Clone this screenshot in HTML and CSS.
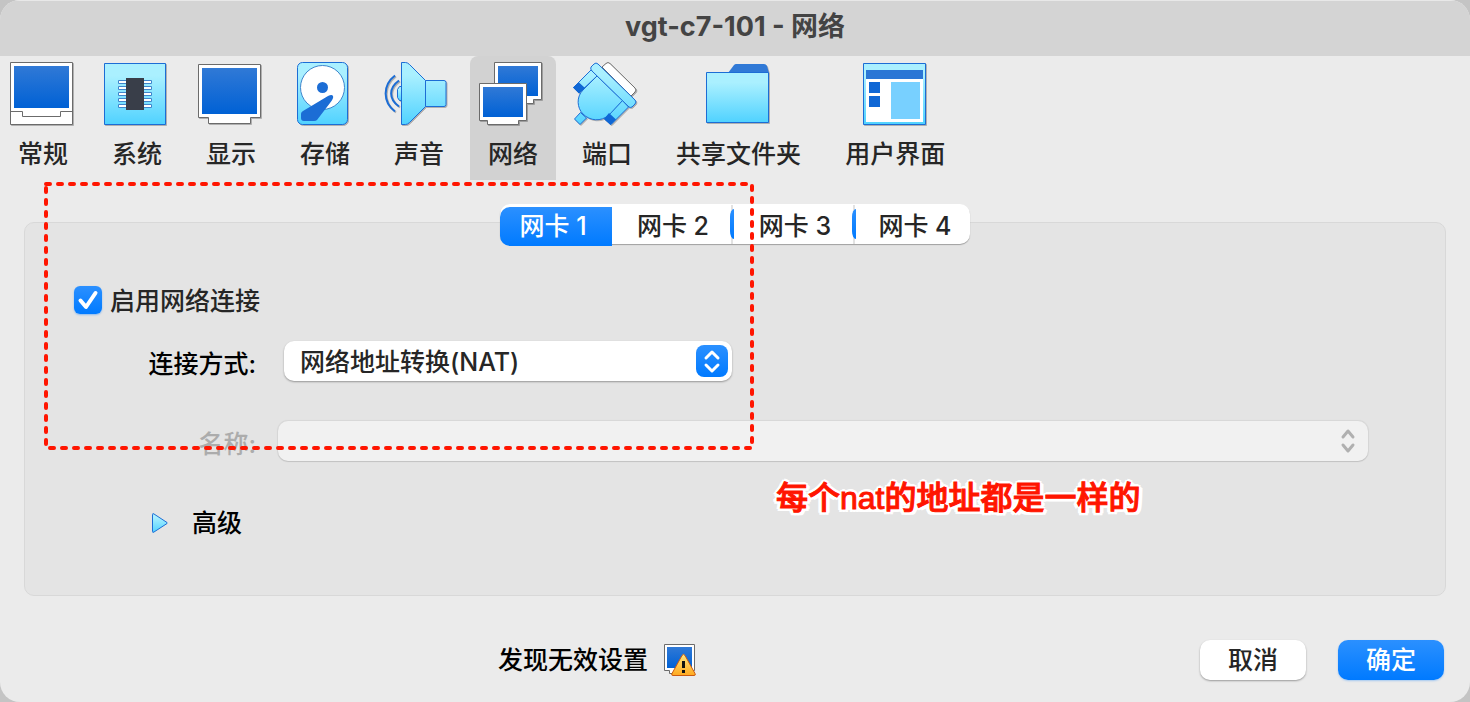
FILE: index.html
```html
<!DOCTYPE html>
<html lang="zh-CN">
<head>
    <meta charset="UTF-8">
    <meta name="viewport" content="width=device-width, initial-scale=1.0">
    <title>vgt-c7-101 - 网络</title>
    <link rel="stylesheet" href="styles.css">
</head>
<body>

    <!-- Shared gradients -->
    <svg class="defs" width="0" height="0" aria-hidden="true">
        <defs>
            <linearGradient id="screen" x1="0" y1="0" x2="0" y2="1">
                <stop offset="0" stop-color="#3079d6"/>
                <stop offset="1" stop-color="#0061d5"/>
            </linearGradient>
            <linearGradient id="cyan" x1="0" y1="0" x2="0" y2="1">
                <stop offset="0.2" stop-color="#aaf0ff"/>
                <stop offset="1" stop-color="#50d2ff"/>
            </linearGradient>
            <linearGradient id="plug" gradientUnits="userSpaceOnUse" x1="0" y1="0" x2="0" y2="64">
                <stop offset="0.2" stop-color="#aaf0ff"/>
                <stop offset="1" stop-color="#50d2ff"/>
            </linearGradient>
            <linearGradient id="warn" x1="0" y1="0" x2="0" y2="1">
                <stop offset="0" stop-color="#ffe680"/>
                <stop offset="1" stop-color="#ffa91f"/>
            </linearGradient>
        </defs>
    </svg>

    <div class="window">
        <header class="titlebar">
            <h1>vgt-c7-101 - 网络</h1>
        </header>

        <!-- Toolbar -->
        <nav class="toolbar">
            <button class="tool" type="button">
                <svg class="icon" viewBox="0 0 64 64">
                    <path d="M.5.5h62v62H.5z" fill="#fff" stroke="#6b6b6b"/>
                    <path d="M4 4h55v42H4z" fill="url(#screen)"/>
                    <path d="M.5 49.500h12v5h38v-5h12" fill="none" stroke="#6b6b6b"/>
                </svg>
                <span>常规</span>
            </button>
            <button class="tool" type="button">
                <svg class="icon" viewBox="0 0 64 64">
                    <path d="M.5 1.500h61v61H.5z" fill="url(#cyan)" stroke="#1c6dd5"/>
                    <g fill="#fff" stroke="#3f86cc">
                        <path d="M14.500 18.500h33v3h-33z"/>
                        <path d="M14.500 24.500h33v3h-33z"/>
                        <path d="M14.500 30.500h33v3h-33z"/>
                        <path d="M14.500 36.500h33v3h-33z"/>
                        <path d="M14.500 42.500h33v3h-33z"/>
                    </g>
                    <path d="M22 16h18v32H22z" fill="#393e49"/>
                </svg>
                <span>系统</span>
            </button>
            <button class="tool" type="button">
                <svg class="icon" viewBox="0 0 64 64">
                    <path d="M.5 2.500h62v53h-10v6h-42v-6H.5z" fill="#fff" stroke="#6b6b6b"/>
                    <path d="M4 6h55v46H4z" fill="url(#screen)"/>
                </svg>
                <span>显示</span>
            </button>
            <button class="tool" type="button">
                <svg class="icon" viewBox="0 0 64 64">
                    <rect x="5.500" y=".5" width="50" height="62" rx="5" fill="url(#cyan)" stroke="#1c6dd5"/>
                    <circle cx="30.500" cy="25.500" r="22" fill="#fff" stroke="#3f86cc"/>
                    <circle cx="30.500" cy="25.500" r="5.500" fill="#1c6dd5"/>
                    <path d="M36 34Q40 32 41 34Q42 36 38 41L25 58Q24 59 22 59H12Q9 59 9 56V52Q9 50 11 49Z" fill="#1c6dd5"/>
                </svg>
                <span>存储</span>
            </button>
            <button class="tool" type="button">
                <svg class="icon" viewBox="0 0 64 64">
                    <path d="M15.500 24.500h-2l-2 3v8l2 3h2z" fill="url(#cyan)" stroke="#1c6dd5"/>
                    <path d="M15.500.5h4q2 0 4 2L39.500 18.500H58q2 0 2 2v22q0 2-2 2H39.500L23.500 60.500q-2 2-4 2h-4zM39.500 18.500v26" fill="url(#cyan)" stroke="#1c6dd5"/>
                    <path d="M13 18.500C2.500 26 2.500 37 13 44.500M9 13.500C-3.500 23 -3.500 40 9 49.500" fill="none" stroke="#1c6dd5" stroke-width="2"/>
                </svg>
                <span>声音</span>
            </button>
            <button class="tool active" type="button">
                <svg class="icon" viewBox="0 0 64 64">
                    <path d="M14.500.5h47v37h-8v4h-31v-4h-8z" fill="#fff" stroke="#6b6b6b"/>
                    <path d="M18 4h40v30H18z" fill="url(#screen)"/>
                    <path d="M-.5 21.500h47v37h-8v4h-31v-4h-8z" fill="#fff" stroke="#6b6b6b"/>
                    <path d="M3 25h40v30H3z" fill="url(#screen)"/>
                </svg>
                <span>网络</span>
            </button>
            <button class="tool" type="button">
                <svg class="icon" viewBox="0 0 64 64">
                    <path d="M32 1.500q2-2 4 0L61 26q2 2 0 4l-4 4L28 5z" fill="#fff" stroke="#6b6b6b"/>
                    <g fill="url(#plug)" stroke="#1c6dd5">
                        <path d="M17 8L23 14L5 31L-.5 25.500z"/>
                        <path d="M48.500 38.500L54.500 45L37 62.500L30.500 57z"/>
                        <path d="M6.500 50.500L12.500 56L6 62.500L.5 57z"/>
                        <path d="M23 14L9 28C2 35 3 46 9 52C16 59 27 60 35 53L48.500 38.500z"/>
                        <path d="M20 2q2-2 4 0L61 38q2 2 0 4l-3 3q-2 1-3 0L18 9q-2-2-1-4z"/>
                    </g>
                    <path d="M5 20.500L11 26L5 31.500L-1 25.500zM35 51L42 57.500L36.500 63L30 57z" fill="#0f67d5"/>
                </svg>
                <span>端口</span>
            </button>
            <button class="tool" type="button">
                <svg class="icon" viewBox="0 0 64 64">
                    <path d="M22 11L28 3q1-1 2-1h28q2 0 3 2l2 7z" fill="#3079d6"/>
                    <path d="M.5 10.500h62v50H.5z" fill="url(#cyan)" stroke="#1c6dd5"/>
                </svg>
                <span>共享文件夹</span>
            </button>
            <button class="tool" type="button">
                <svg class="icon" viewBox="0 0 64 64">
                    <path d="M1.500 1.500h62v61h-62z" fill="url(#cyan)" stroke="#1c6dd5"/>
                    <path d="M4 17h57v43H4z" fill="#fff"/>
                    <path d="M4 8h57v9H4z" fill="#2b76d5"/>
                    <path d="M7 20h11v11H7zM7 34h11v11H7z" fill="#0f67d5"/>
                    <path d="M29 20h29v37H29z" fill="#78d0ff"/>
                </svg>
                <span>用户界面</span>
            </button>
        </nav>

        <!-- Network settings -->
        <main class="content">
            <div class="tabs">
                <button class="tab selected" type="button">网卡 1</button>
                <button class="tab" type="button">网卡 2</button>
                <button class="tab" type="button">网卡 3</button>
                <button class="tab" type="button">网卡 4</button>
            </div>

            <div class="panel">
                <div class="enable">
                    <input type="checkbox" id="enable-net" checked>
                    <svg class="tick" viewBox="0 0 28 28"><path d="M6.500 14.500L12 21L21.500 7"/></svg>
                    <label for="enable-net">启用网络连接</label>
                </div>

                <div class="field">
                    <label for="attach">连接方式:</label>
                    <div class="select-box attach">
                        <select id="attach">
                            <option>网络地址转换(NAT)</option>
                        </select>
                        <svg class="arrows" viewBox="0 0 32 32"><path d="M10 13L16 7L22 13M10 20L16 26L22 20"/></svg>
                    </div>
                </div>

                <div class="field disabled">
                    <label for="net-name">名称:</label>
                    <div class="select-box">
                        <select id="net-name" disabled></select>
                        <svg class="arrows" viewBox="0 0 32 32"><path d="M11 12L16 6L21 12M11 20L16 26L21 20"/></svg>
                    </div>
                </div>

                <button class="advanced" type="button">
                    <svg width="16" height="20" viewBox="0 0 16 20"><path d="M.5 1.500Q.5 0 2 1L15 9.500Q16 10 15 10.500L2 19Q.5 20 .5 18.500z" fill="url(#cyan)" stroke="#1c6dd5"/></svg>
                    <span>高级</span>
                </button>
            </div>
        </main>

        <footer class="footer">
            <div class="status">
                <span>发现无效设置</span>
                <svg width="32" height="32" viewBox="0 0 32 32">
                    <path d="M.5.5h30v26h-4v3h-21v-3h-5z" fill="#fff" stroke="#6b6b6b"/>
                    <path d="M3 3h25v21H3z" fill="url(#screen)"/>
                    <path d="M18 11.500Q19.500 9 21 11.500L31 29.500Q32 31.500 30 31.500H9Q7 31.500 8 29.500z" fill="url(#warn)" stroke="#cc5a10"/>
                    <path d="M18 17h3v7h-3zM18 26h3v3h-3z" fill="#111"/>
                </svg>
            </div>
            <button class="btn" type="button">取消</button>
            <button class="btn primary" type="button">确定</button>
        </footer>

        <!-- Annotations over the window -->
        <svg class="mark" width="710" height="268" viewBox="0 0 710 268" aria-hidden="true">
            <path d="M2 2H704"/>
            <path d="M2 6V262"/>
            <path d="M708 4V262"/>
            <path d="M6 266H708"/>
        </svg>
        <p class="note">每个nat的地址都是一样的</p>
    </div>

</body>
</html>
```
FILE: styles.css
```css
* {
    box-sizing: border-box;
    margin: 0;
    padding: 0;
}

body {
    background: #c4c4c4;
    font-family: 'Inter', 'Noto Sans CJK SC', sans-serif;
    font-size: 25px;
    font-weight: 500;
    line-height: 32px;
    color: #262626;
}

button, select, input {
    font: inherit;
    color: inherit;
    border: none;
    background: none;
}

.defs {
    position: absolute;
}

.window {
    position: relative;
    display: flex;
    flex-direction: column;
    min-height: 100vh;
    background: #ebebeb;
    border-radius: 20px;
    overflow: hidden;
}

.titlebar {
    height: 56px;
    padding-bottom: 4px;
    background: #d4d4d4;
    border-top: 1px solid #e8e8e8;
    display: flex;
    align-items: center;
    justify-content: center;
}

.titlebar h1 {
    font-size: 27px;
    font-weight: bold;
    color: #444;
}

/* Toolbar */
.toolbar {
    display: flex;
    gap: 8px;
}

.tool {
    display: flex;
    flex-direction: column;
    align-items: center;
    height: 124px;
    padding: 6px 18px 0;
    gap: 12px;
    white-space: nowrap;
}

.tool.active {
    background: #d2d2d2;
    border-radius: 8px 8px 0 0;
}

.icon {
    width: 64px;
    height: 64px;
    flex: none;
    margin: 0 -6px 0 -8px;
    overflow: visible;
    filter: drop-shadow(1px 1px 0 rgba(0, 0, 0, 0.25));
}

/* Tabs */
.content {
    padding: 24px 24px 0;
}

.tabs {
    position: relative;
    z-index: 1;
    display: flex;
    width: max-content;
    height: 40px;
    margin: 0 auto -22px;
    background: #fff;
    border-radius: 10px;
    box-shadow: 0 1px 1px rgba(0, 0, 0, 0.3);
}

.tab {
    position: relative;
    width: 122px;
    height: 40px;
    padding-top: 4px;
}

.tab:first-child {
    width: 112px;
}

.tab:last-child {
    width: 114px;
    padding-left: 4px;
}

.tab.selected {
    height: 39px;
    margin-top: 3px;
    padding: 0 6px 2px 0;
    color: #fff;
    background: linear-gradient(#2b90ff, #007aff);
    border-radius: 10px 0 0 10px;
}

/* Divider with the blue edge between tabs */
.tab:nth-child(2)::after,
.tab:nth-child(3)::after {
    content: "";
    position: absolute;
    right: 0;
    top: 5px;
    width: 4px;
    height: 30px;
    background: linear-gradient(#2b90ff, #007aff);
    border-radius: 4px 0 0 4px / 8px 0 0 8px;
}

.tab:nth-child(2)::before,
.tab:nth-child(3)::before {
    content: "";
    position: absolute;
    right: 1px;
    top: 1px;
    width: 2px;
    height: 39px;
    background: #e2e2e2;
}

/* Panel */
.panel {
    background: #e4e4e4;
    border: 1px solid #d8d8d8;
    border-radius: 10px;
    padding: 57px 77px 52px 49px;
}

.enable {
    position: relative;
    display: flex;
    align-items: center;
    gap: 8px;
    height: 40px;
}

.enable label {
    padding-top: 2px;
}

.enable input {
    appearance: none;
    width: 28px;
    height: 28px;
    border-radius: 6px;
    background: #fff;
    box-shadow: 0 1px 2px rgba(0, 0, 0, 0.3);
}

.enable input:checked {
    background: linear-gradient(#2b90ff, #007aff);
    box-shadow: 0 1px 2px rgba(0, 122, 255, 0.4);
}

.tick {
    position: absolute;
    left: 0;
    top: 6px;
    width: 28px;
    height: 28px;
    fill: none;
    stroke: #fff;
    stroke-width: 4;
    stroke-linecap: round;
    stroke-linejoin: round;
    pointer-events: none;
}

.field {
    display: grid;
    grid-template-columns: 182px 1fr;
    column-gap: 22px;
    align-items: center;
    margin-top: 21px;
    color: #000;
}

.field label {
    text-align: right;
    padding-top: 6px;
}

.field.disabled {
    margin-top: 40px;
    color: #acacac;
}

.select-box {
    position: relative;
    height: 40px;
}

.select-box.attach {
    width: 448px;
    margin-left: 6px;
}

.select-box select {
    appearance: none;
    display: block;
    width: 100%;
    height: 40px;
    padding: 2px 48px 0 16px;
    color: #262626;
    background: #fff;
    border-radius: 10px;
    box-shadow: 0 1px 2px rgba(0, 0, 0, 0.35);
}

.select-box select:disabled {
    background: #f1f1f1;
    box-shadow: 0 0 1px 1px rgba(0, 0, 0, 0.06), 0 1px 1px rgba(0, 0, 0, 0.1);
    opacity: 1;
}

.arrows {
    position: absolute;
    right: 4px;
    top: 4px;
    width: 32px;
    height: 32px;
    fill: none;
    stroke: #b0b0b0;
    stroke-width: 3;
    stroke-linecap: round;
    stroke-linejoin: round;
    pointer-events: none;
}

.attach .arrows {
    stroke: #fff;
    background: linear-gradient(#2b90ff, #007aff);
    border-radius: 8px;
}

.advanced {
    display: flex;
    align-items: center;
    gap: 24px;
    height: 40px;
    margin: 42px 0 0 78px;
    color: #000;
}

/* Footer */
.footer {
    display: flex;
    align-items: center;
    padding: 44px 26px 22px 0;
    gap: 32px;
}

.status {
    flex: 1;
    display: flex;
    align-items: center;
    justify-content: center;
    gap: 16px;
    padding-left: 26px;
    color: #000;
}

.btn {
    width: 106px;
    height: 40px;
    border-radius: 10px;
    background: #fff;
    box-shadow: 0 1px 2px rgba(0, 0, 0, 0.35);
}

.btn.primary {
    color: #fff;
    background: linear-gradient(#2b90ff, #007aff);
    box-shadow: 0 1px 2px rgba(0, 122, 255, 0.3);
}

/* Annotations */
.mark {
    position: absolute;
    left: 44px;
    top: 182px;
    z-index: 2;
    fill: none;
    stroke: #ff1500;
    stroke-width: 4;
    stroke-linecap: round;
    stroke-dasharray: 4 8;
    pointer-events: none;
}

.note {
    position: absolute;
    left: 776px;
    top: 478px;
    z-index: 2;
    font-family: 'Liberation Sans', 'Noto Sans CJK SC', sans-serif;
    font-size: 32px;
    line-height: 40px;
    color: #ff1500;
    -webkit-text-stroke: 1px #ff1500;
    text-shadow: 3px 0 #fff, -3px 0 #fff, 0 3px #fff, 0 -3px #fff,
        2px 2px #fff, -2px 2px #fff, 2px -2px #fff, -2px -2px #fff,
        4px 1px #fff, -4px 1px #fff, 3px 3px #fff, -3px 3px #fff;
}
```
